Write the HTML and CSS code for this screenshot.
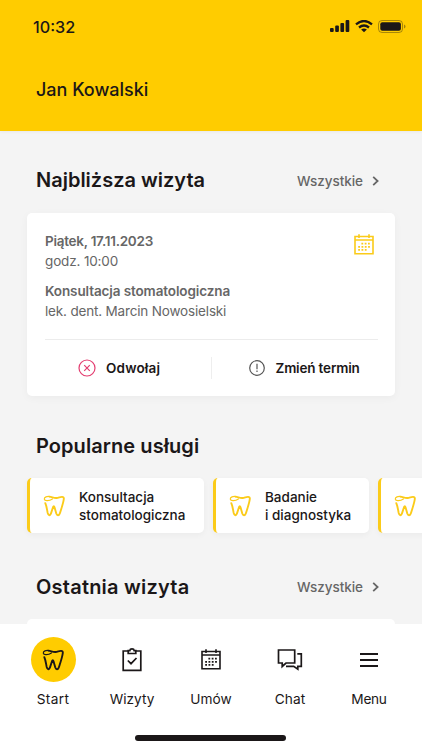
FILE: index.html
```html
<!DOCTYPE html>
<html lang="pl">
<head>
<meta charset="utf-8">
<meta name="viewport" content="width=device-width, initial-scale=1">
<title>Start</title>
<link rel="stylesheet" href="styles.css">
</head>
<body>
<svg class="defs" aria-hidden="true">
  <symbol id="tooth" viewBox="0 0 22 22">
    <path class="ring" d="M9.4 3.9C6.4 6 1.6 6.4 1.3 4.2C1 2 4.2 1.1 6.8 1.6"/>
    <path d="M6.4 1.6C9.4 2 11.4 3.7 14.5 2.9C17 2.2 21.2 .6 20.8 4C20.3 8.2 18.6 12.9 16.9 18.2C16.1 20.8 14.1 21 13.3 18.5L11.5 12.2C11.1 10.9 10.5 10.9 10 12.2L8 18.4C7.1 21 5.4 20.7 4.7 18C4 14.9 3.7 11.3 2.3 8.2"/>
  </symbol>
  <symbol id="calendar" viewBox="0 0 20 21">
    <path d="M1 2.5H19V19.7H1ZM1 6H19M5 .3V4M15 .3V4"/>
    <path class="dots" d="M7.4 9.7H16.2M4.2 12.8H16.2M4.2 15.9H13"/>
  </symbol>
  <symbol id="chevron" viewBox="0 0 7 10"><path d="M1.2 .8L5.6 5L1.2 9.2"/></symbol>
</svg>
<div class="screen">
  <header class="header">
    <div class="status">
      <span class="clock">10:32</span>
      <span class="signals">
        <svg class="bars" viewBox="0 0 20 13"><rect x="0" y="8" width="3.7" height="4" rx="1"/><rect x="5.2" y="5.5" width="3.7" height="6.5" rx="1"/><rect x="10.4" y="3" width="3.7" height="9" rx="1"/><rect x="15.6" y="0" width="3.7" height="12" rx="1"/></svg>
        <svg class="wifi" viewBox="0 0 18 13"><path class="arc" d="M1 4.3Q9-2.3 17 4.3M4 7.5Q9 3.5 14 7.5"/><path d="M6.1 9.4Q9 7.5 11.9 9.4L9 12.2Z"/></svg>
        <svg class="battery" viewBox="0 0 28 13"><rect class="case" x=".5" y=".5" width="24" height="12" rx="3.5"/><rect x="2.3" y="2.3" width="20.6" height="8.4" rx="2"/><path class="tip" d="M26 4.5Q27.5 5 27.5 6.5Q27.5 8 26 8.5Z"/></svg>
      </span>
    </div>
    <div class="user">Jan Kowalski</div>
  </header>
  <main class="content">
    <div class="heading first">
      <h2>Najbliższa wizyta</h2>
      <a class="all">Wszystkie <svg class="chev"><use href="#chevron"/></svg></a>
    </div>
    <section class="card">
      <div class="visit">
        <div class="details">
          <p class="strong date">Piątek, 17.11.2023</p>
          <p class="hour">godz. 10:00</p>
          <p class="strong service">Konsultacja stomatologiczna</p>
          <p class="doctor">lek. dent. Marcin Nowosielski</p>
        </div>
        <svg class="cal yellow"><use href="#calendar"/></svg>
      </div>
      <div class="actions">
        <div class="action cancel"><svg viewBox="0 0 18 18"><circle cx="9" cy="9" r="8"/><path d="M6.2 6.2L11.8 11.8M11.8 6.2L6.2 11.8"/></svg><span>Odwołaj</span></div>
        <div class="action change"><svg viewBox="0 0 18 18"><circle cx="9" cy="9" r="7.3"/><path d="M9 4.8V10.3M9 11.5V13"/></svg><span>Zmień termin</span></div>
      </div>
    </section>
    <div class="heading second"><h2 class="t-pop">Popularne usługi</h2></div>
    <div class="tiles">
      <div class="tile one"><svg class="tooth"><use href="#tooth"/></svg><span>Konsultacja<br>stomatologiczna</span></div>
      <div class="tile two"><svg class="tooth"><use href="#tooth"/></svg><span>Badanie<br>i diagnostyka</span></div>
      <div class="tile three"><svg class="tooth"><use href="#tooth"/></svg></div>
    </div>
    <div class="heading third">
      <h2 class="t-last">Ostatnia wizyta</h2>
      <a class="all">Wszystkie <svg class="chev"><use href="#chevron"/></svg></a>
    </div>
    <section class="peek"></section>
  </main>
  <nav class="nav">
    <div class="tabs">
      <a class="tab active"><span class="icon"><svg class="tooth"><use href="#tooth"/></svg></span><span>Start</span></a>
      <a class="tab"><span class="icon"><svg class="clip" viewBox="0 0 20 24"><path d="M6 3H1.2V22.3H18.8V3H14M6.2 2.6H7.8Q8 .9 10 .9Q12 .9 12.2 2.6H13.8V5.5H6.2ZM5.8 12.5L9 15.7L14.5 10"/></svg></span><span>Wizyty</span></a>
      <a class="tab"><span class="icon"><svg class="cal"><use href="#calendar"/></svg></span><span>Umów</span></a>
      <a class="tab"><span class="icon"><svg class="chat" viewBox="0 0 26 23"><path d="M1.5 2H17.7V15H9L5.2 18.5V15H1.5ZM20.3 5.8H24.3V18.3H20.8V21.2L16.7 18.3H9"/></svg></span><span>Chat</span></a>
      <a class="tab menu"><span class="icon"><svg class="burger" viewBox="0 0 18 14"><path d="M0 1H18M0 7H18M0 13H18"/></svg></span><span>Menu</span></a>
    </div>
    <div class="home"></div>
  </nav>
</div>
</body>
</html>
```

FILE: styles.css
```css
* { box-sizing: border-box; }
body { margin: 0; font-family: Inter, "Liberation Sans", sans-serif; color: #1b1718; font-size: 13.5px; }
h2, p { margin: 0; }
svg { display: block; fill: none; stroke: currentColor; flex: none; }
.defs { position: absolute; width: 0; height: 0; }
.screen { width: 422px; height: 750px; overflow: hidden; background: #f4f4f4; display: flex; flex-direction: column; }
.header { height: 131px; flex: none; background: #fc0; box-shadow: 0 1px 3px #0000000d; }
.status { display: flex; justify-content: space-between; align-items: center; height: 54px; padding: 0 16px 0 33px; }
.clock { font-size: 16.2px; font-weight: 500; line-height: 20px; }
.signals { display: flex; align-items: center; gap: 5px; padding-bottom: 2px; }
.signals svg { fill: #1b1718; stroke: none; }
.bars { width: 20px; height: 13px; }
.wifi { width: 18px; height: 13px; }
.signals .arc { fill: none; stroke: #1b1718; stroke-width: 2.3; }
.battery { width: 28px; height: 13px; }
.signals .battery .case { fill: none; stroke: #1b1718; opacity: .38; }
.battery .tip { opacity: .4; }
.user { padding: 23px 36px 0; font-size: 18px; line-height: 26px; font-weight: 500; }
.content { flex: 1; min-height: 0; overflow: hidden; }
.heading { display: flex; justify-content: space-between; align-items: center; padding: 0 43px 0 36px; height: 30px; }
.heading.first { margin-top: 34px; }
.heading.first .all { margin-top: 2px; }
.heading.second { margin-top: 35px; }
.heading.third { margin-top: 39px; }
h2 { font-size: 20px; line-height: 30px; font-weight: 600; white-space: nowrap; }
.t-pop { letter-spacing: .07px; }
.t-last { letter-spacing: .22px; }
.all { display: flex; align-items: center; gap: 9px; font-weight: 500; color: #666; line-height: 20px; letter-spacing: -.05px; }
.chev { width: 7px; height: 10px; stroke-width: 1.8; }
.card { margin: 18px 27px 0; height: 183px; padding: 18px 17px 0 18px; border-radius: 5px; background: #fff; box-shadow: 0 2px 8px #0000000a; }
.visit { display: flex; justify-content: space-between; height: 109px; border-bottom: 1px solid #ececec; }
.details { color: #666; line-height: 20px; white-space: nowrap; }
.strong { font-weight: 600; }
.date { letter-spacing: -.26px; }
.hour { letter-spacing: -.15px; }
.service { margin-top: 10px; letter-spacing: -.11px; }
.doctor { letter-spacing: -.17px; }
.cal { width: 20px; height: 21px; stroke-width: 1.6; }
.dots { stroke-width: 1.7; stroke-dasharray: 1.8 1.5; }
.visit .cal { margin: 3px 4px 0 0; }
.yellow { color: #fbcb19; }
.actions { display: flex; height: 56px; align-items: center; }
.action { width: 167px; height: 22px; display: flex; align-items: center; font-weight: 600; gap: 10px; white-space: nowrap; }
.action svg { width: 18px; height: 18px; stroke-width: 1.2; }
.cancel { padding-left: 33px; border-right: 1px solid #eee; letter-spacing: .18px; }
.cancel svg { color: #e33d70; }
.change { padding-left: 36px; letter-spacing: -.17px; }
.change svg { color: #555; }
.tiles { display: flex; gap: 9px; margin: 17px 0 0 27px; }
.tile { flex: none; height: 55px; display: flex; align-items: center; gap: 14px; padding-left: 13px; background: #fff; border-left: 3px solid #fbcb19; border-radius: 5px; line-height: 18px; font-weight: 500; box-shadow: 0 2px 6px #0000000a; white-space: nowrap; }
.one { width: 177px; }
.two { width: 156px; }
.three { width: 156px; }
.tooth { width: 22px; height: 22px; stroke-width: 1.9; stroke-linecap: round; }
.ring { stroke-width: 1.2; }
.tile .tooth { color: #fbcb19; }
.peek { margin: 17px 27px 0; height: 80px; background: #fff; border-radius: 5px; }
.nav { flex: none; height: 126px; background: #fff; }
.tabs { display: flex; padding: 13px 13.5px 0; }
.tab { flex: 1; display: flex; flex-direction: column; align-items: center; gap: 7px; line-height: 20px; font-size: 13.7px; }
.active { letter-spacing: .35px; }
.menu { letter-spacing: -.3px; }
.icon { width: 45px; height: 45px; display: flex; align-items: center; justify-content: center; border-radius: 50%; }
.active .icon { background: #fc0; }
.clip { width: 20px; height: 24px; stroke-width: 1.7; }
.chat { width: 26px; height: 23px; stroke-width: 1.7; }
.burger { width: 18px; height: 14px; stroke-width: 2; }
.home { width: 151px; height: 6px; margin: 26px 0 0 135px; border-radius: 3px; background: #1b1718; }
```
